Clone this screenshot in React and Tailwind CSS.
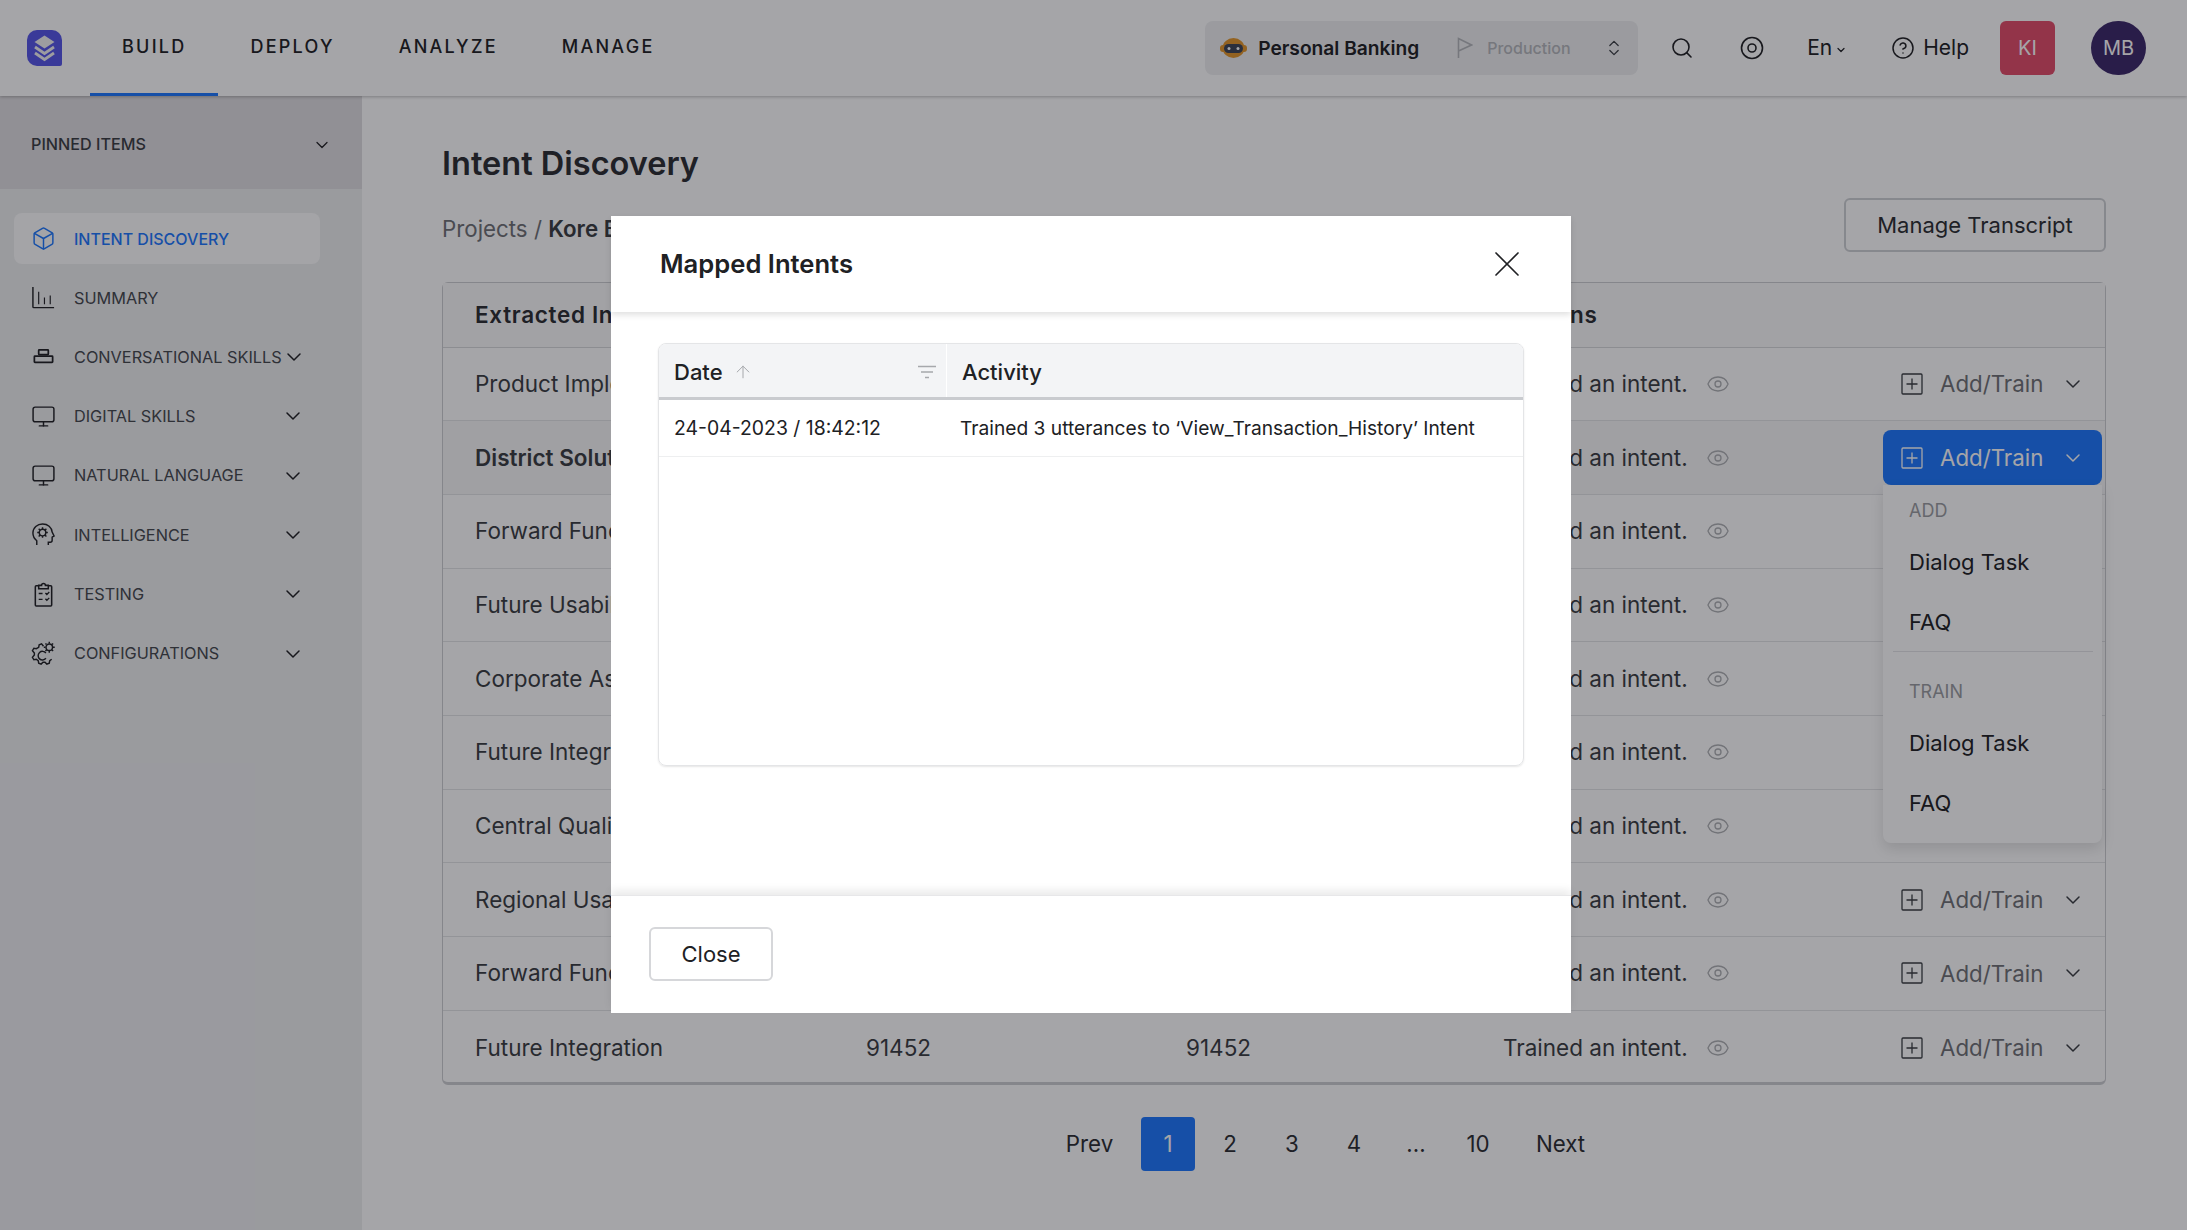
import { Box, ChevronDown, ChevronsUpDown, CircleHelp, Eye, Monitor, Search, X, ArrowUp } from 'lucide-react';

const font = { fontFamily: 'Inter, "Noto Sans", sans-serif' };

const tabs = ['BUILD', 'DEPLOY', 'ANALYZE', 'MANAGE'];

function SummaryIcon({ className }) {
    return (
        <svg viewBox="0 0 26 26" className={className} fill="none" stroke="currentColor" strokeWidth="1.5">
            <path d="M2 2v20.5a1 1 0 0 0 1 1h21" />
            <path d="M8 7v13M14 13v7M20 11v9" strokeWidth="1.2" />
        </svg>
    );
}

function SkillsIcon({ className }) {
    return (
        <svg viewBox="0 0 26 26" className={className} fill="none" stroke="currentColor" strokeWidth="1.8">
            <rect x="8" y="5" width="10" height="5" rx="0.6" />
            <rect x="3.500" y="11.500" width="19" height="6.500" rx="0.6" />
        </svg>
    );
}

function HeadIcon({ className }) {
    return (
        <svg viewBox="0 0 26 26" className={className} fill="none" stroke="currentColor" strokeWidth="1.5">
            <path d="M6 24v-4.500C3.500 17.500 2 15 2 11.500 2 6 6.500 2 12 2c5.500 0 9.500 3.500 10 8.500l2 4-2 1.200V19a2 2 0 0 1-2 2h-2v3" />
            <circle cx="12" cy="11" r="3.400" />
            <path d="M12 5.500v2M12 14.500v2M6.500 11h2M15.500 11h2M8 7l1.500 1.500M14.500 13.500 16 15M16 7l-1.500 1.500M9.500 13.500 8 15" />
        </svg>
    );
}

function TestingIcon({ className }) {
    return (
        <svg viewBox="0 0 26 26" className={className} fill="none" stroke="currentColor" strokeWidth="1.6">
            <path d="M8 4H5.500a1 1 0 0 0-1 1v19a1 1 0 0 0 1 1h15a1 1 0 0 0 1-1V5a1 1 0 0 0-1-1H18" />
            <path d="M8 7V3.500h3a2 2 0 0 1 4 0h3V7z" />
            <path d="M8 12h4M8 18h4M15 11.500l1.500 1.500 2.500-2.500M15 17.500l1.500 1.500 2.500-2.500" strokeWidth="1.4" />
        </svg>
    );
}

function ConfigIcon({ className }) {
    return (
        <svg viewBox="0 0 26 26" className={className} fill="none" stroke="currentColor" strokeWidth="1.5">
            <path d="M13 5.500 11 3 8.500 4 8 6.500 5.500 8 3 7.500 1.500 10 3.500 12.500v2L1.500 17 3 19.500l2.500-.5 2 1.500.5 2.500 2.500 1 2-2h2l2 2 2.500-1 .5-2.500 2-1.500" />
            <path d="M15.500 12.500a4.500 4.500 0 1 0 0 5.500" />
            <circle cx="19" cy="6.500" r="3.400" />
            <path d="M19 .8v1.800M19 10.400v1.800M13.300 6.500h1.800M22.900 6.500h1.800M15 2.500l1.200 1.200M21.800 9.300 23 10.500M23 2.500l-1.200 1.200M16.200 9.300 15 10.500" />
        </svg>
    );
}

function PlusBoxIcon({ className }) {
    return (
        <svg viewBox="0 0 22 22" className={className} fill="none" stroke="currentColor" strokeWidth="1.3">
            <rect x="1" y="1" width="20" height="20" rx="1" />
            <path d="M11 5.500v11M5.500 11h11" />
        </svg>
    );
}

const sideItems = [
    { label: 'INTENT DISCOVERY', icon: Box, active: true },
    { label: 'SUMMARY', icon: SummaryIcon },
    { label: 'CONVERSATIONAL SKILLS', icon: SkillsIcon, arrow: true },
    { label: 'DIGITAL SKILLS', icon: Monitor, arrow: true },
    { label: 'NATURAL LANGUAGE', icon: Monitor, arrow: true },
    { label: 'INTELLIGENCE', icon: HeadIcon, arrow: true },
    { label: 'TESTING', icon: TestingIcon, arrow: true },
    { label: 'CONFIGURATIONS', icon: ConfigIcon, arrow: true },
];

const rows = [
    'Product Implementation', 'District Solutions', 'Forward Functionality', 'Future Usability', 'Corporate Assurance',
    'Future Integration', 'Central Quality', 'Regional Usability', 'Forward Functionality', 'Future Integration',
];

function Logo() {
    return (
        <svg viewBox="0 0 35 36" className="w-[35px] h-9 shrink-0">
            <path d="M10 0h15a10 10 0 0 1 10 10v24a2 2 0 0 1-2 2H10A10 10 0 0 1 0 26V10A10 10 0 0 1 10 0z" fill="#5656e7" />
            <path d="M17.500 5.500 27.500 12l-10 6.500L7.500 12z" fill="#f2f2f2" />
            <path d="M8 17l9.500 6.500L27 17M8 23l9.500 6.500L27 23" fill="none" stroke="#f2f2f2" strokeWidth="2.800" />
        </svg>
    );
}

function BotIcon() {
    return (
        <svg viewBox="0 0 27 20" className="w-[27px] h-5 shrink-0">
            <rect x="0" y="7" width="27" height="7" rx="3" fill="#e3962a" />
            <ellipse cx="13.500" cy="10" rx="11" ry="10" fill="#e3962a" />
            <rect x="4" y="6" width="19" height="9" rx="4.500" fill="#3d4456" />
            <circle cx="9" cy="10.500" r="1.500" fill="#fff" />
            <circle cx="18" cy="10.500" r="1.500" fill="#fff" />
        </svg>
    );
}

function Header() {
    return (
        <header className="h-24 shrink-0 bg-white flex items-center pl-[27px] pr-[41px] shadow-[0_1px_3px_rgba(0,0,0,0.25)] relative z-10">
            <Logo />
            <nav className="flex h-full ml-7">
                {tabs.map((t) => (
                    <div key={t} className={`px-8 h-full flex items-center text-[18px] font-medium tracking-[0.125em] text-[#202124] border-b-[3px] ${t === 'BUILD' ? 'border-[#1d78fd]' : 'border-transparent'}`}>
                        {t}
                    </div>
                ))}
            </nav>
            <div className="ml-auto flex items-center">
                <div className="w-[433px] h-[54px] rounded-lg bg-[#eff0f1] flex items-center pl-[15px]">
                    <BotIcon />
                    <span className="ml-[11px] w-[160px] text-[19.200px] font-semibold text-[#202124] whitespace-nowrap">Personal Banking</span>
                    <svg viewBox="0 0 16 22" className="w-4 h-[22px] ml-[39px] text-[#b5b7bb]" fill="none" stroke="currentColor" strokeWidth="1.600">
                        <path d="M1.500 21V1.500L14.500 8 1.500 14" />
                    </svg>
                    <span className="ml-[14px] w-[84px] text-[16px] font-medium text-[#b5b7bb] whitespace-nowrap">Production</span>
                    <ChevronsUpDown className="w-[20px] h-[24px] ml-[33px] text-[#3a3d42]" strokeWidth={1.500} />
                </div>
                <Search className="w-6 h-6 ml-[32px] text-[#202124]" strokeWidth={1.600} />
                <svg viewBox="0 0 24 24" className="w-6 h-6 ml-[46px] text-[#202124]" fill="none" stroke="currentColor" strokeWidth="1.600">
                    <circle cx="12" cy="12" r="10.500" />
                    <circle cx="12" cy="12" r="4" />
                </svg>
                <span className="ml-[43px] text-[21px] text-[#202124]">En</span>
                <ChevronDown className="w-3 h-3 ml-[3px] mt-1 text-[#202124]" strokeWidth={2.500} />
                <CircleHelp className="w-6 h-6 ml-[44px] text-[#202124]" strokeWidth={1.500} />
                <span className="ml-2 text-[21px] text-[#202124]">Help</span>
                <div className="ml-[31px] w-[55px] h-[54px] rounded-md bg-[#e24c69] text-white text-[20px] flex items-center justify-center">KI</div>
                <div className="ml-9 w-[55px] h-[54px] rounded-full bg-[#3c2869] text-white text-[20px] flex items-center justify-center">MB</div>
            </div>
        </header>
    );
}

function Sidebar() {
    return (
        <aside className="w-[362px] shrink-0 bg-[#eeeff0]">
            <div className="h-[93px] bg-[#e0dee1] flex items-center pl-[31px] pr-[30px] justify-between pt-1">
                <span className="text-[16.200px] font-medium text-[#3a3d42]">PINNED ITEMS</span>
                <ChevronDown className="w-5 h-5 text-[#202124]" strokeWidth={1.500} />
            </div>
            <div className="pt-6 pl-[14px] w-[320px]">
                {sideItems.map((item) => (
                    <div key={item.label} className={`h-[51px] mb-[8.300px] rounded-lg flex items-center pl-[17px] pr-[15px] ${item.active ? 'bg-[#fdfdfd] text-[#1d78fd] font-medium text-[16px]' : 'text-[#45484d] text-[16.300px]'}`}>
                        <item.icon className={`w-[25px] h-[25px] shrink-0 ${item.active ? 'text-[#1d78fd]' : 'text-[#202124]'}`} strokeWidth={1.400} />
                        <span className="ml-[18px] whitespace-nowrap">{item.label}</span>
                        {item.arrow && <ChevronDown className="w-[24px] h-[24px] ml-auto shrink-0 text-[#202124]" strokeWidth={1.500} />}
                    </div>
                ))}
            </div>
        </aside>
    );
}

function AddTrain({ open }) {
    return (
        <div className="relative ml-auto mr-[3px]">
            <div className={`w-[219px] h-[55px] rounded-lg flex items-center pl-[16px] pr-[17px] text-[22.300px] ${open ? 'bg-[#1d78fd] text-white' : 'text-[#6f7176]'}`}>
                <PlusBoxIcon className={`w-[22px] h-[22px] mx-[2px] shrink-0 ${open ? 'text-white' : 'text-[#3a3d42]'}`} />
                <span className="ml-[15px]">Add/Train</span>
                <ChevronDown className={`w-6 h-6 ml-auto ${open ? 'text-white' : 'text-[#3a3d42]'}`} strokeWidth={1.500} />
            </div>
            {open && (
                <div className="absolute z-20 left-0 top-full w-[219px] h-[358px] bg-white rounded-b-lg shadow-[0_6px_14px_rgba(0,0,0,0.12)] pl-[26px] text-[#202124] text-[22px]">
                    <div className="h-[50px] flex items-center text-[18px] text-[#9a9ca1]">ADD</div>
                    <div className="h-[54px] flex items-center">Dialog Task</div>
                    <div className="h-[62px] pt-1 flex items-center">FAQ</div>
                    <div className="h-px bg-[#e4e5e7] -ml-4 mr-[9px]" />
                    <div className="h-[78px] flex items-center text-[18px] text-[#9a9ca1]">TRAIN</div>
                    <div className="h-[26px] flex items-center">Dialog Task</div>
                    <div className="h-[94px] flex items-center">FAQ</div>
                </div>
            )}
        </div>
    );
}

function Main() {
    return (
        <main className="flex-1 bg-white pl-[80px] pr-[81px] pt-[49px] relative">
            <h1 className="text-[32.500px] leading-[38px] font-semibold text-[#2b2d31]">Intent Discovery</h1>
            <div className="flex items-center justify-between mt-[15px] h-[54px]">
                <div className="text-[22.300px] text-[#6f7176] mt-2">
                    Projects / <span className="font-semibold text-[#3a3d42]">Kore Bank</span>
                </div>
                <button className="w-[262px] h-[54px] border-2 border-[#cfd1d4] rounded-md text-[22px] text-[#2b2d31]">Manage Transcript</button>
            </div>
            <div className="mt-[30px] h-[803px] border border-b-[3px] border-[#cdced1] rounded-md text-[22.500px] text-[#3a3d42]">
                <div className="h-[64.500px] flex items-center pl-[32px] font-semibold text-[#2b2d31] border-b border-[#d8d9db] bg-[#fbfbfb] tracking-[0.03em]">
                    <span className="w-[391px]">Extracted Intents</span>
                    <span className="w-[320px]">Traits</span>
                    <span className="w-[324px]">Utterances</span>
                    <span>Actions</span>
                </div>
                {rows.map((name, i) => (
                    <div key={i} className={`h-[73.700px] flex items-center pl-[32px] border-b last:border-b-0 border-[#e3e4e6] ${i === 1 ? 'bg-[#f7f7f8]' : ''}`}>
                        <span className={`w-[391px] whitespace-nowrap ${i === 1 ? 'font-semibold' : ''}`}>{name}</span>
                        <span className="w-[320px]">91452</span>
                        <span className="w-[317px]">91452</span>
                        <span className="whitespace-nowrap">Trained an intent.</span>
                        <Eye className="w-[24px] h-[24px] ml-[18px] text-[#aeb0b3]" strokeWidth={1.300} />
                        <AddTrain open={i === 1} />
                    </div>
                ))}
            </div>
            <div className="flex items-center justify-center gap-2 mt-[32px] pl-[106px] text-[22.300px] text-[#2b2d31]">
                <span className="w-[87px] text-center">Prev</span>
                {['1', '2', '3', '4', '...', '10'].map((p, i) => (
                    <span key={p} className={`w-[54px] h-[54px] rounded-sm flex items-center justify-center ${i === 0 ? 'bg-[#1d78fd] text-white' : ''}`}>{p}</span>
                ))}
                <span className="w-[95px] text-center">Next</span>
            </div>
        </main>
    );
}

function MappedIntents() {
    return (
        <div className="w-[960px] h-[797px] bg-white flex flex-col">
            <div className="h-[96px] shrink-0 flex items-center justify-between pl-[49px] pr-[42px] shadow-[0_3px_6px_rgba(0,0,0,0.12)]">
                <h2 className="text-[25.600px] font-semibold text-[#202124]">Mapped Intents</h2>
                <X className="w-[44px] h-[44px] text-[#202124]" strokeWidth={0.900} />
            </div>
            <div className="flex-1 px-[47px] pt-[31px]">
                <div className="h-[423px] border border-[#e4e5e7] rounded-lg shadow-[0_1px_2px_rgba(0,0,0,0.1)] overflow-hidden">
                    <div className="h-[56px] bg-[#f3f4f6] border-b-[3px] border-[#c9cbcf] flex items-center text-[22px] font-medium text-[#202124]">
                        <div className="w-[288px] h-full flex items-center pl-[15px] pt-[3px] border-r border-white">
                            <span>Date</span>
                            <ArrowUp className="w-5 h-5 ml-[10px] text-[#a6a8ac]" strokeWidth={1.200} />
                            <svg viewBox="0 0 20 14" className="w-5 h-[14px] ml-auto mr-[9px] text-[#a6a8ac]" fill="none" stroke="currentColor" strokeWidth="1.300">
                                <path d="M1 1.500h18M4 7h12M8 12.500h4" />
                            </svg>
                        </div>
                        <div className="pl-[15px] pt-[3px]">Activity</div>
                    </div>
                    <div className="h-[57px] border-b border-[#eeeff0] flex items-center text-[#202124]">
                        <div className="w-[288px] pl-[15px] pt-[2px] text-[19.400px]">24-04-2023 / 18:42:12</div>
                        <div className="pl-[13px] text-[19.200px] whitespace-nowrap">Trained 3 utterances to ‘View_Transaction_History’ Intent</div>
                    </div>
                </div>
            </div>
            <div className="h-[118px] shrink-0 border-t border-[#e7e7e9] shadow-[0_-5px_8px_rgba(0,0,0,0.08)] pl-[38px] pt-[31px]">
                <button className="w-[124px] h-[54px] border-2 border-[#d6d7da] rounded-md text-[22px] text-[#202124]">Close</button>
            </div>
        </div>
    );
}

export default function App() {
    return (
        <div className="relative h-screen overflow-hidden flex flex-col bg-white" style={font}>
            <Header />
            <div className="flex flex-1 min-h-0">
                <Sidebar />
                <Main />
            </div>
            {/* modal backdrop */}
            <div className="absolute inset-0 z-30 bg-[#0a0a14]/[0.37] flex items-center justify-center pr-[5px] pb-[1px]">
                <MappedIntents />
            </div>
        </div>
    );
}
